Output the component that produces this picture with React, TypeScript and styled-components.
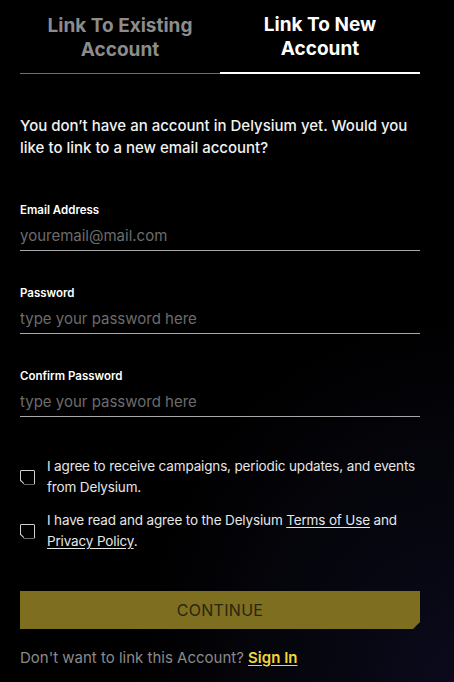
import React from "react";
import styled, { createGlobalStyle } from "styled-components";

const GlobalStyle = createGlobalStyle`
  html, body {
    margin: 0;
    padding: 0;
  }
  body {
    min-height: 682px;
    background: radial-gradient(ellipse 90% 70% at 100% 100%, #0a0a1c 0%, #05050c 45%, #000000 80%);
    font-family: Inter, "Noto Sans", sans-serif;
    color: #ffffff;
  }
`;

const Page = styled.div`
  width: 400px;
  padding: 0 20px 16px;
  box-sizing: content-box;
`;

const Tabs = styled.div`
  display: grid;
  grid-template-columns: 1fr 1fr;
`;

const Tab = styled.div<{ $active?: boolean }>`
  text-align: center;
  font-size: 19px;
  font-weight: 700;
  line-height: 24px;
  padding: 13px 0 11px;
  color: ${(p) => (p.$active ? "#ffffff" : "#8c8c8c")};
  border-bottom: ${(p) => (p.$active ? "2px solid #ffffff" : "1px solid #6e6e6e")};
  align-self: end;
`;

const Intro = styled.p`
  margin: 41px 0 44px;
  font-size: 15px;
  line-height: 22px;
  font-weight: 500;
  color: #f2f2f2;
`;

const Fields = styled.div`
  display: flex;
  flex-direction: column;
  gap: 35px;
`;

const Field = styled.label`
  display: flex;
  flex-direction: column;
`;

const Label = styled.span`
  font-size: 11.5px;
  font-weight: 600;
  line-height: 15px;
  color: #ffffff;
`;

const Input = styled.input`
  margin-top: 2px;
  height: 30px;
  padding: 0;
  border: none;
  border-bottom: 1px solid #a8a8a8;
  background: transparent;
  font-family: inherit;
  font-size: 15px;
  color: #ffffff;
  outline: none;
  &::placeholder {
    color: #6c6c6c;
  }
`;

const Checks = styled.div`
  margin-top: 39px;
  display: flex;
  flex-direction: column;
  gap: 12px;
`;

const CheckRow = styled.div`
  display: flex;
  align-items: center;
  gap: 12px;
`;

const Box = styled.span`
  flex: none;
  width: 15px;
  height: 15px;
  box-sizing: border-box;
  border: 1.5px solid #d0d0d0;
  border-radius: 1px;
  clip-path: polygon(0 0, 100% 0, 100% 100%, 4px 100%, 0 calc(100% - 4px));
  position: relative;
`;

const BoxCorner = styled.span`
  position: absolute;
  left: -1px;
  bottom: -1px;
  width: 6px;
  height: 1.5px;
  background: #d0d0d0;
  transform-origin: 0 0;
  transform: translate(0, -4px) rotate(45deg);
`;

const CheckText = styled.p`
  margin: 0;
  font-size: 13.5px;
  letter-spacing: -0.15px;
  line-height: 21px;
  color: #e6e6e6;
`;

const TextLink = styled.a<{ $accent?: boolean }>`
  color: ${(p) => (p.$accent ? "#f2d53c" : "#e6e6e6")};
  font-weight: ${(p) => (p.$accent ? 600 : "inherit")};
  text-decoration: underline;
  text-underline-offset: 2px;
`;

const Button = styled.button`
  margin-top: 39px;
  width: 100%;
  height: 38px;
  border: none;
  background: #7e6e20;
  clip-path: polygon(0 0, 100% 0, 100% calc(100% - 7px), calc(100% - 7px) 100%, 0 100%);
  font-family: inherit;
  font-size: 16px;
  letter-spacing: 0.3px;
  color: #2a260f;
  cursor: pointer;
`;

const Footer = styled.p`
  margin: 19px 0 0;
  font-size: 15px;
  line-height: 20px;
  color: #8a8a8a;
`;

const Checkbox = () => (
  <Box>
    <BoxCorner />
  </Box>
);

export default function App() {
  return (
    <>
      <GlobalStyle />
      <Page>
        <Tabs>
          <Tab>
            Link To Existing
            <br />
            Account
          </Tab>
          <Tab $active>
            Link To New
            <br />
            Account
          </Tab>
        </Tabs>
        <Intro>
          You don’t have an account in Delysium yet. Would you like to link to a new email account?
        </Intro>
        <Fields>
          <Field>
            <Label>Email Address</Label>
            <Input placeholder="youremail@mail.com" />
          </Field>
          <Field>
            <Label>Password</Label>
            <Input type="password" placeholder="type your password here" />
          </Field>
          <Field>
            <Label>Confirm Password</Label>
            <Input type="password" placeholder="type your password here" />
          </Field>
        </Fields>
        <Checks>
          <CheckRow>
            <Checkbox />
            <CheckText>I agree to receive campaigns, periodic updates, and events from Delysium.</CheckText>
          </CheckRow>
          <CheckRow>
            <Checkbox />
            <CheckText>
              I have read and agree to the Delysium <TextLink href="#">Terms of Use</TextLink> and{" "}
              <TextLink href="#">Privacy Policy</TextLink>.
            </CheckText>
          </CheckRow>
        </Checks>
        <Button>CONTINUE</Button>
        <Footer>
          Don't want to link this Account? <TextLink $accent href="#">Sign In</TextLink>
        </Footer>
      </Page>
    </>
  );
}
